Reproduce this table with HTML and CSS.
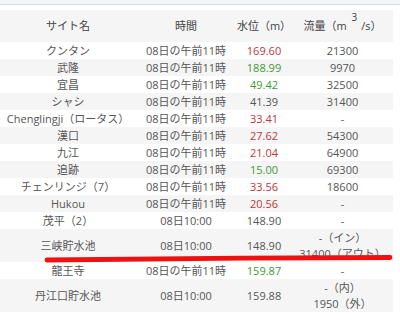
FILE: index.html
```html
<!DOCTYPE html>
<html lang="ja">
<head>
<meta charset="utf-8">
<link rel="stylesheet" href="styles.css">
</head>
<body>
<div class="page">
  <div class="topbar"></div>
  <table class="levels">
    <colgroup>
      <col class="c-site"><col class="c-time"><col class="c-level"><col class="c-flow">
    </colgroup>
    <thead>
      <tr>
        <th>サイト名</th>
        <th>時間</th>
        <th>水位（m）</th>
        <th><span class="flowhead">流量（m<span class="sup">3</span>/s）</span></th>
      </tr>
    </thead>
    <tbody>
      <tr><td>クンタン</td><td>08日の午前11時</td><td class="up">169.60</td><td>21300</td></tr>
      <tr><td>武隆</td><td>08日の午前11時</td><td class="down">188.99</td><td>9970</td></tr>
      <tr><td>宜昌</td><td>08日の午前11時</td><td class="down">49.42</td><td>32500</td></tr>
      <tr><td>シャシ</td><td>08日の午前11時</td><td>41.39</td><td>31400</td></tr>
      <tr><td>Chenglingji（ロータス）</td><td>08日の午前11時</td><td class="up">33.41</td><td>-</td></tr>
      <tr><td>漢口</td><td>08日の午前11時</td><td class="up">27.62</td><td>54300</td></tr>
      <tr><td>九江</td><td>08日の午前11時</td><td class="up">21.04</td><td>64900</td></tr>
      <tr><td>追跡</td><td>08日の午前11時</td><td class="down">15.00</td><td>69300</td></tr>
      <tr><td>チェンリンジ（7）</td><td>08日の午前11時</td><td class="up">33.56</td><td>18600</td></tr>
      <tr><td>Hukou</td><td>08日の午前11時</td><td class="up">20.56</td><td>-</td></tr>
      <tr><td>茂平（2）</td><td>08日10:00</td><td>148.90</td><td>-</td></tr>
      <tr class="tall"><td>三峡貯水池</td><td>08日10:00</td><td>148.90</td><td><div class="ln">-（イン）</div><div class="ln">31400（アウト）</div></td></tr>
      <tr><td>龍王寺</td><td>08日の午前11時</td><td class="down">159.87</td><td>-</td></tr>
      <tr class="tall"><td>丹江口貯水池</td><td>08日10:00</td><td>159.88</td><td><div class="ln">-（内）</div><div class="ln">1950（外）</div></td></tr>
    </tbody>
  </table>
  <svg class="mark" width="400" height="322" viewBox="0 0 400 322">
    <path d="M47 260 C 150 259, 280 257.5, 390 257.5" fill="none" stroke="#f01010" stroke-width="4.8" stroke-linecap="round"/>
  </svg>
</div>
</body>
</html>
```

FILE: styles.css
```css
html, body {
  margin: 0;
  padding: 0;
  background: #ffffff;
}

.page {
  position: relative;
  width: 400px;
  height: 322px;
  overflow: hidden;
  font-family: "Open Sans", "Noto Sans CJK JP", sans-serif;
  font-size: 11px;
  color: #555555;
}

.topbar {
  height: 4px;
  background: #f4f7fa;
  border-bottom: 1px solid #c8dced;
  margin-bottom: 5px;
}

.levels {
  width: 393px;
  table-layout: fixed;
  border-collapse: collapse;
  border-spacing: 0;
}

.c-site { width: 136px; }
.c-time { width: 100px; }
.c-level { width: 56px; }
.c-flow { width: 101px; }

.levels th,
.levels td {
  padding: 0;
  text-align: center;
  vertical-align: middle;
  white-space: nowrap;
  line-height: 16px;
  height: 17px;
}

.levels th {
  height: 32px;
  font-weight: normal;
  color: #444444;
  background: #f5f5f5;
}

.levels tbody tr:nth-child(even) td {
  background: #f5f5f5;
}

.levels tr.tall td {
  height: 33px;
}

.ln {
  height: 16px;
  line-height: 16px;
}

.flowhead {
  display: inline-block;
}

.sup {
  display: inline-block;
  transform: translateY(-9px);
  font-size: 10px;
  margin: 0 4px 0 5px;
}

.up { color: #c0353a; }
.down { color: #3c9a35; }

.mark {
  position: absolute;
  left: 0;
  top: 0;
  filter: blur(0.6px);
  pointer-events: none;
}
```
